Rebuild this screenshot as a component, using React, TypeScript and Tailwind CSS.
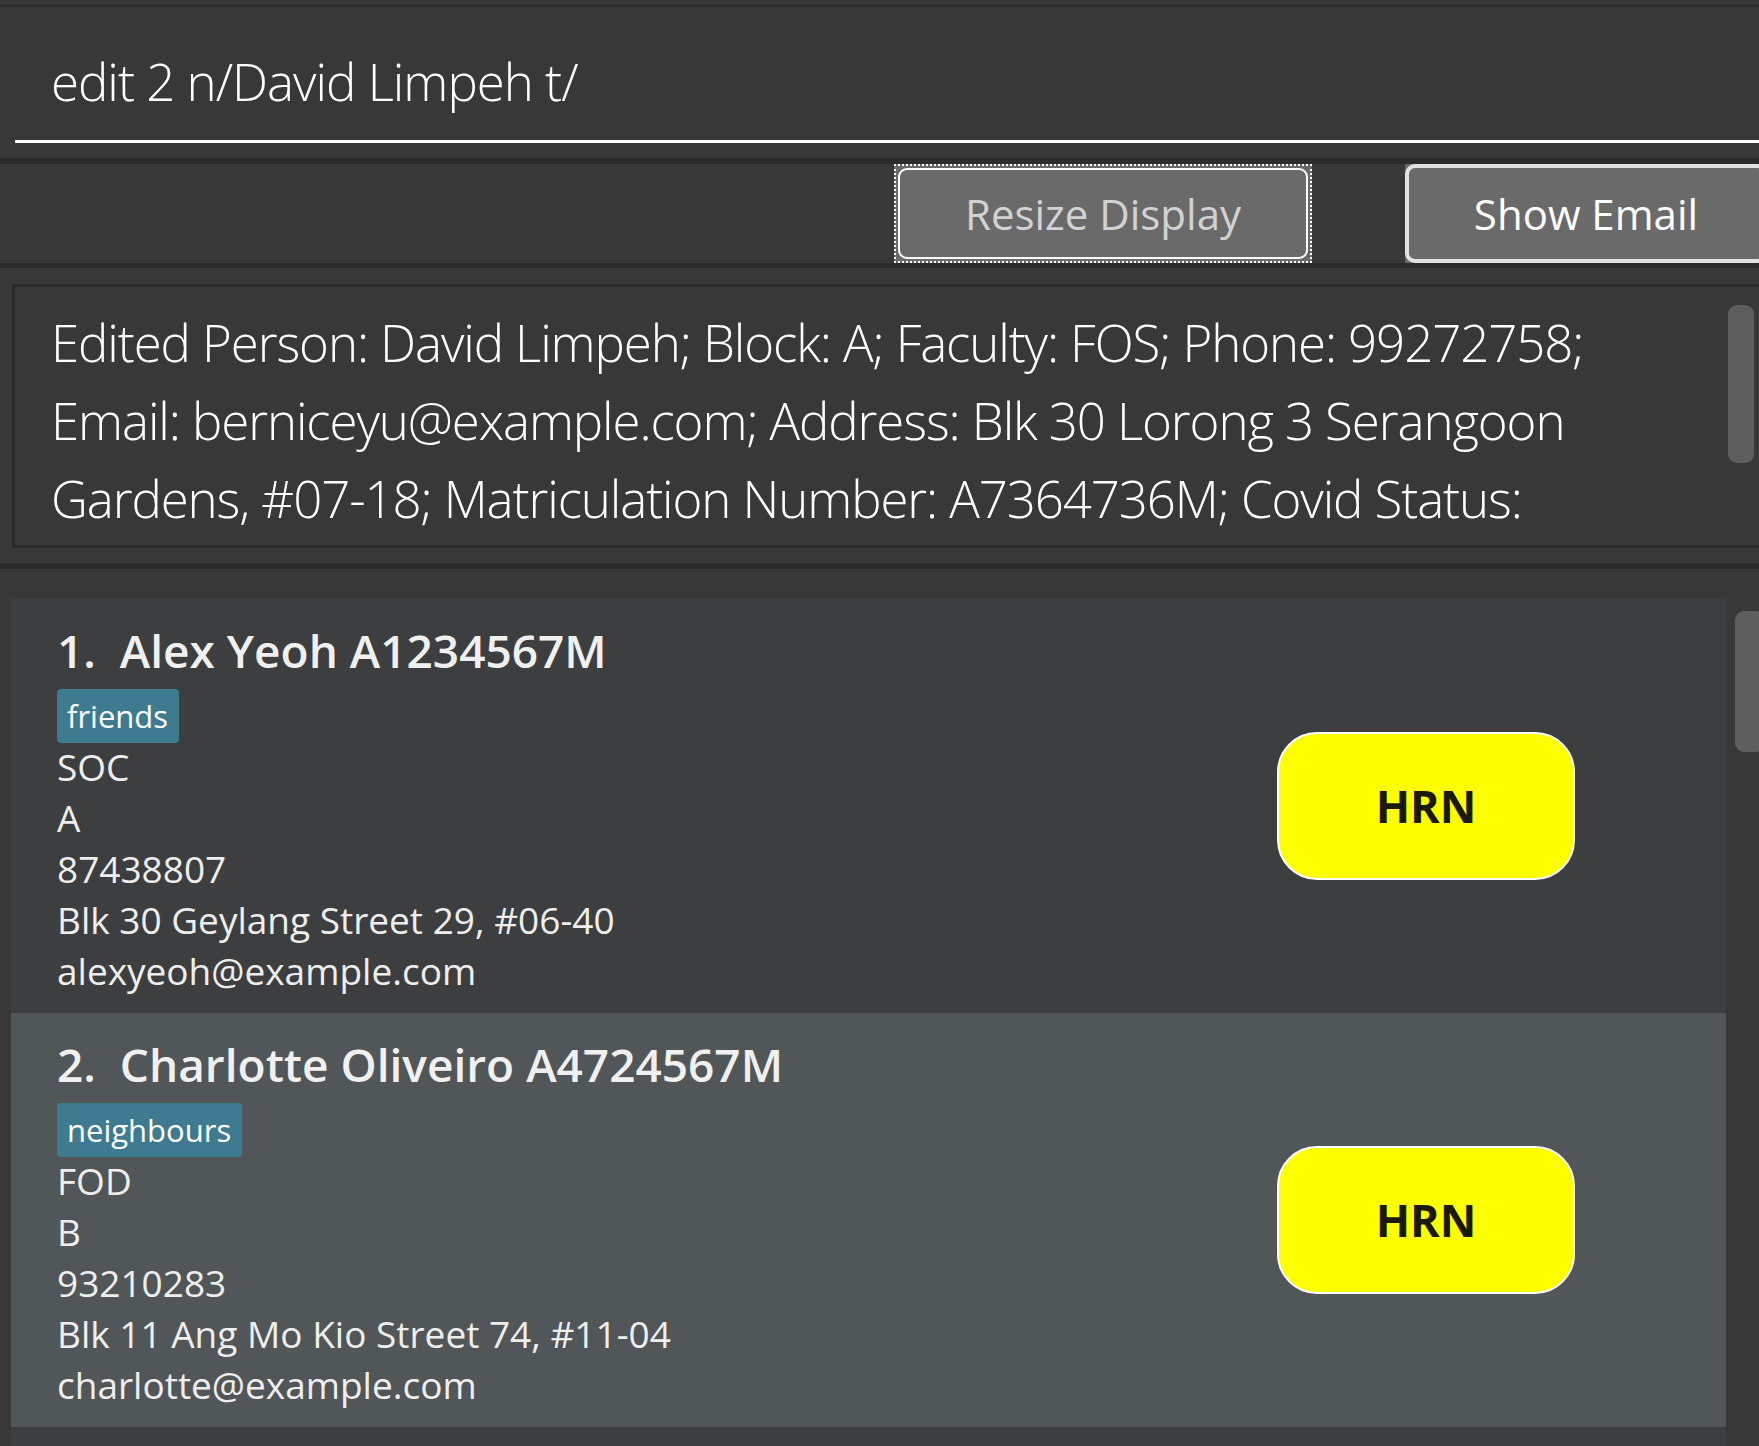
import React from "react";

type Person = {
  index: number;
  name: string;
  matric: string;
  tag: string;
  faculty: string;
  block: string;
  phone: string;
  address: string;
  email: string;
  bg: string;
};

const PEOPLE: Person[] = [
  {
    index: 1,
    name: "Alex Yeoh",
    matric: "A1234567M",
    tag: "friends",
    faculty: "SOC",
    block: "A",
    phone: "87438807",
    address: "Blk 30 Geylang Street 29, #06-40",
    email: "alexyeoh@example.com",
    bg: "bg-[#3c3e3f]",
  },
  {
    index: 2,
    name: "Charlotte Oliveiro",
    matric: "A4724567M",
    tag: "neighbours",
    faculty: "FOD",
    block: "B",
    phone: "93210283",
    address: "Blk 11 Ang Mo Kio Street 74, #11-04",
    email: "charlotte@example.com",
    bg: "bg-[#515658]",
  },
];

const RESULT_LINES = [
  "Edited Person: David Limpeh; Block: A; Faculty: FOS; Phone: 99272758;",
  "Email: berniceyu@example.com; Address: Blk 30 Lorong 3 Serangoon",
  "Gardens, #07-18; Matriculation Number: A7364736M; Covid Status:",
];

function PersonCard({ person }: { person: Person }) {
  return (
    <div className={`flex h-[414px] shrink-0 items-center ${person.bg}`}>
      <div className="flex h-full flex-1 flex-col pl-[46px] pt-[21px]">
        <div className="whitespace-nowrap text-[46px] font-semibold leading-[60px] text-[#f0f0f0]">
          {person.index}.&nbsp;&nbsp;{person.name} {person.matric}
        </div>
        <div className="mt-[9px] flex">
          <span className="h-[54px] rounded-[4px] bg-[#3e7b91] pl-[10px] pr-[11px] text-[31px] leading-[54px] text-white">
            {person.tag}
          </span>
        </div>
        <div className="-mt-[2px] flex flex-col text-[37px] leading-[51px] text-[#eeeeee]">
          <span>{person.faculty}</span>
          <span>{person.block}</span>
          <span>{person.phone}</span>
          <span>{person.address}</span>
          <span>{person.email}</span>
        </div>
      </div>
      <div className="mr-[151px] flex h-[148px] w-[298px] items-center justify-center rounded-[40px] border-2 border-white bg-[#ffff00] text-[45px] font-bold text-[#1a1a00]">
        HRN
      </div>
    </div>
  );
}

export default function App() {
  return (
    <div className="flex h-[1446px] w-[1759px] flex-col overflow-hidden bg-[#383838] font-['Open_Sans',sans-serif]">
      {/* menu bar edge */}
      <div className="h-[5px] shrink-0" />
      <div className="h-[2px] shrink-0 bg-[#2b2b2b]" />

      {/* command box */}
      <div className="h-[151px] shrink-0 pl-[15px]">
        <div className="h-[136px] whitespace-nowrap border-b-[3px] border-white pl-[36px] pt-[38px] text-[51px] font-light leading-[72px] tracking-[-1px] text-white">
          edit 2 n/David Limpeh t/
        </div>
      </div>
      <div className="h-[6px] shrink-0 bg-[#2b2b2b]" />

      {/* buttons */}
      <div className="flex h-[99px] shrink-0 overflow-hidden pl-[894px]">
        <div className="flex h-full w-[418px] shrink-0 items-center justify-center border-2 border-dotted border-white bg-[#6a6a6a] p-[2px]">
          <div className="flex h-full w-full items-center justify-center rounded-[9px] border-2 border-white text-[42px] text-[#d2d2d2]">
            Resize Display
          </div>
        </div>
        <div className="ml-[93px] h-full w-[362px] shrink-0 bg-[#6a6a6a]">
          <div className="flex h-full w-full items-center justify-center rounded-[10px] border-[4px] border-[#e2e2e2] text-[42px] text-white">
            Show Email
          </div>
        </div>
      </div>
      <div className="h-[5px] shrink-0 bg-[#2b2b2b]" />

      {/* result display */}
      <div className="h-[295px] shrink-0 pl-[12px] pt-[16px]">
        <div className="relative -mr-[20px] h-[264px] overflow-hidden border-[3px] border-[#2b2b2b] pl-[36px] pt-[16px] text-[51px] font-light leading-[78px] tracking-[-1.1px] text-white">
          {RESULT_LINES.map((line) => (
            <div key={line} className="whitespace-nowrap">
              {line}
            </div>
          ))}
          <div className="absolute left-[1713px] top-[18px] h-[158px] w-[26px] rounded-[9px] bg-[#5e5e5e]" />
        </div>
      </div>
      <div className="h-[6px] shrink-0 bg-[#2b2b2b]" />

      {/* person list */}
      <div className="relative flex flex-1 flex-col overflow-hidden pl-[11px] pr-[33px] pt-[30px]">
        {PEOPLE.map((p) => (
          <PersonCard key={p.index} person={p} />
        ))}
        <div className="h-[414px] shrink-0 bg-[#3c3e3f]" />
        <div className="absolute left-[1735px] top-[42px] h-[141px] w-[30px] rounded-[9px] bg-[#5e5e5e]" />
      </div>
    </div>
  );
}
